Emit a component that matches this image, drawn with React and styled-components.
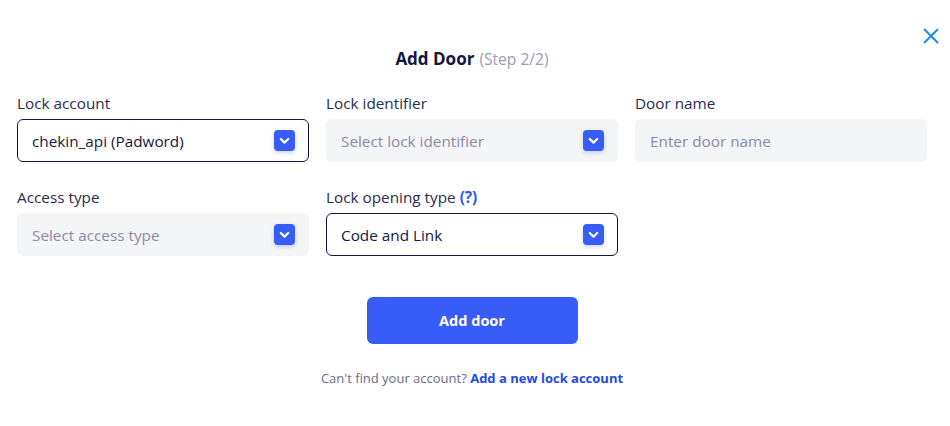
import React from "react";
import styled, { createGlobalStyle } from "styled-components";

const Global = createGlobalStyle`
  html, body { margin: 0; padding: 0; background: #fff; }
  body { font-family: "Open Sans", Lato, sans-serif; -webkit-font-smoothing: antialiased; }
  * { box-sizing: border-box; }
`;

const Modal = styled.div`
  position: relative;
  width: 950px;
  height: 426px;
  background: #fff;
  padding: 46px 23px 0 17px;
`;

const Close = styled.button`
  position: absolute;
  top: 27px;
  right: 10px;
  width: 18px;
  height: 18px;
  padding: 0;
  border: none;
  background: none;
  cursor: pointer;
  display: flex;
  align-items: center;
  justify-content: center;
`;

const Title = styled.h2`
  margin: 0;
  text-align: center;
  font-size: 17px;
  line-height: 26px;
  font-weight: 700;
  color: #161643;
`;

const Step = styled.span`
  font-weight: 400;
  font-size: 15.6px;
  color: #9a9abd;
  margin-left: 5px;
`;

const Grid = styled.div`
  margin-top: 21px;
  display: grid;
  grid-template-columns: repeat(3, 292px);
  column-gap: 17px;
  row-gap: 25px;
`;

const Field = styled.div`
  display: flex;
  flex-direction: column;
  gap: 6px;
`;

const Label = styled.label`
  font-size: 15.3px;
  line-height: 20px;
  color: #2b2b4d;
`;

const Help = styled.span`
  color: #2f55f0;
  font-weight: 700;
`;

const Box = styled.div`
  height: 43px;
  border-radius: 6px;
  display: flex;
  align-items: center;
  justify-content: space-between;
  padding: 0 13px 0 14px;
  font-size: 15.3px;
  background: ${(p) => (p.$filled ? "#fff" : "#f4f5f7")};
  border: 1px solid ${(p) => (p.$filled ? "#161643" : "#f4f5f7")};
  color: ${(p) => (p.$filled ? "#161643" : "#8b8aa8")};
`;

const Chevron = styled.span`
  width: 21px;
  height: 21px;
  border-radius: 4px;
  background: #385cf8;
  box-shadow: 0 2px 4px rgba(56, 92, 248, 0.25);
  display: flex;
  align-items: center;
  justify-content: center;
`;

const Actions = styled.div`
  margin-top: 41px;
  display: flex;
  flex-direction: column;
  align-items: center;
`;

const Button = styled.button`
  width: 211px;
  height: 47px;
  border: none;
  border-radius: 6px;
  background: #385cf8;
  color: #fff;
  font-family: inherit;
  font-size: 14.5px;
  font-weight: 700;
  cursor: pointer;
`;

const Footer = styled.p`
  margin: 25px 0 0;
  font-size: 13px;
  line-height: 18px;
  color: #6b6b88;
`;

const Link = styled.a`
  color: #1f4aef;
  font-weight: 700;
  text-decoration: none;
`;

const ChevronIcon = () => (
  <svg width="11" height="8" viewBox="0 0 11 8">
    <path d="M1.8 2 L5.5 5.6 L9.2 2" fill="none" stroke="#fff" strokeWidth="2.2" strokeLinecap="round" strokeLinejoin="round" />
  </svg>
);

const SelectBox = ({ value, placeholder }) => (
  <Box $filled={!!value}>
    <span>{value || placeholder}</span>
    <Chevron>
      <ChevronIcon />
    </Chevron>
  </Box>
);

export default function App() {
  return (
    <>
      <Global />
      <Modal>
        <Close aria-label="Close">
          <svg width="16" height="16" viewBox="0 0 16 16">
            <path d="M1.5 1.5 L14.5 14.5 M14.5 1.5 L1.5 14.5" stroke="#1a8df5" strokeWidth="2" strokeLinecap="round" />
          </svg>
        </Close>
        <Title>
          Add Door<Step>(Step 2/2)</Step>
        </Title>
        <Grid>
          <Field>
            <Label>Lock account</Label>
            <SelectBox value="chekin_api (Padword)" />
          </Field>
          <Field>
            <Label>Lock identifier</Label>
            <SelectBox placeholder="Select lock identifier" />
          </Field>
          <Field>
            <Label>Door name</Label>
            <Box>Enter door name</Box>
          </Field>
          <Field>
            <Label>Access type</Label>
            <SelectBox placeholder="Select access type" />
          </Field>
          <Field>
            <Label>
              Lock opening type <Help>(?)</Help>
            </Label>
            <SelectBox value="Code and Link" />
          </Field>
        </Grid>
        <Actions>
          <Button>Add door</Button>
          <Footer>
            Can't find your account? <Link href="#">Add a new lock account</Link>
          </Footer>
        </Actions>
      </Modal>
    </>
  );
}
